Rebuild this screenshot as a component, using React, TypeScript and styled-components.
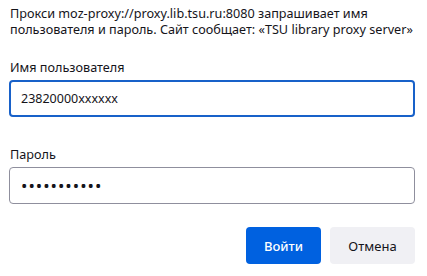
import * as React from 'react';
import styled, { createGlobalStyle } from 'styled-components';

const GlobalStyle = createGlobalStyle`
  html, body {
    margin: 0;
    padding: 0;
    background: #ffffff;
  }
  body {
    font-family: "Noto Sans", "Open Sans", sans-serif;
    color: #15141a;
  }
`;

const Dialog = styled.div`
  width: 427px;
  height: 276px;
  box-sizing: border-box;
  padding: 5px 12px 0 9px;
  display: flex;
  flex-direction: column;
`;

const Message = styled.div`
  font-size: 12.65px;
  line-height: 16px;
  padding-left: 1px;
`;

const Label = styled.label`
  display: block;
  font-size: 12.65px;
  line-height: 16px;
  padding-left: 1px;
  margin-bottom: 5px;
`;

const Field = styled.div<{ $gap: number }>`
  margin-top: ${(p) => p.$gap}px;
`;

const Input = styled.input<{ $focused?: boolean }>`
  display: block;
  box-sizing: border-box;
  width: 406px;
  height: 37px;
  margin: 0;
  border-radius: 4px;
  border: ${(p) => (p.$focused ? '2px solid #1861c9' : '1px solid #8f8f9d')};
  padding: 0 ${(p) => (p.$focused ? 10 : 11)}px;
  font-family: "Noto Sans", "Open Sans", sans-serif;
  font-size: 12.5px;
  color: #15141a;
  background: #ffffff;
  outline: none;
`;

const PasswordInput = styled(Input)`
  font-size: 17px;
  letter-spacing: 1px;
`;

const Actions = styled.div`
  display: flex;
  justify-content: flex-end;
  gap: 9px;
  margin-top: 23px;
`;

const Button = styled.button<{ $primary?: boolean }>`
  height: 37px;
  padding: 0;
  width: ${(p) => (p.$primary ? 75 : 85)}px;
  border: none;
  border-radius: 4px;
  font-family: "Noto Sans", "Open Sans", sans-serif;
  font-size: 13px;
  font-weight: ${(p) => (p.$primary ? 500 : 400)};
  background: ${(p) => (p.$primary ? '#0061e0' : '#f0f0f4')};
  color: ${(p) => (p.$primary ? '#ffffff' : '#15141a')};
`;

export default function App() {
  return (
    <>
      <GlobalStyle />
      <Dialog>
        <Message>
          Прокси moz-proxy://proxy.lib.tsu.ru:8080 запрашивает имя
          <br />
          пользователя и пароль. Сайт сообщает: «TSU library proxy server»
        </Message>
        <Field $gap={22}>
          <Label>Имя пользователя</Label>
          <Input $focused defaultValue="23820000xxxxxx" />
        </Field>
        <Field $gap={29}>
          <Label>Пароль</Label>
          <PasswordInput type="password" defaultValue="12345678901" />
        </Field>
        <Actions>
          <Button $primary>Войти</Button>
          <Button>Отмена</Button>
        </Actions>
      </Dialog>
    </>
  );
}
